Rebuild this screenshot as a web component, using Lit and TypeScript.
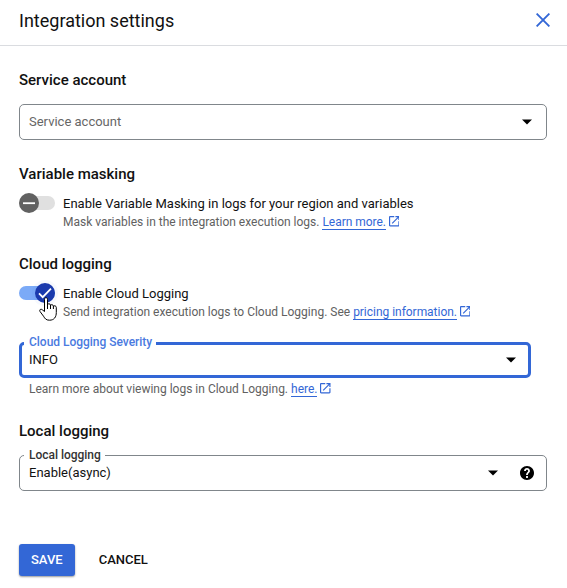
import { LitElement, html, css, svg } from "lit";
import { customElement, property } from "lit/decorators.js";

@customElement("select-field")
class SelectField extends LitElement {
  @property() label = "";
  @property() value = "";
  @property() placeholder = "";
  @property({ type: Boolean, reflect: true }) active = false;
  @property({ type: Boolean, reflect: true }) help = false;

  static styles = css`
    :host { display: block; position: relative; height: 36px; box-sizing: border-box; border: 1px solid #80868b; border-radius: 5px; }
    :host([active]) { border: 3px solid #3367d6; margin-right: 16px; }
    .row { display: flex; align-items: center; height: 100%; padding: 0 13px 0 9px; }
    :host([active]) .row { padding: 0 11px 0 7px; }
    .text { flex: 1; font-size: 13px; line-height: 20px; color: #111; }
    .placeholder { color: #666; }
    .arrow { width: 12px; height: 6px; display: block; }
    .help { width: 14px; height: 14px; display: block; margin-left: 21px; }
    :host([help]) .row { padding-right: 12px; }
    .label { position: absolute; top: -9px; left: 4px; padding: 0 4px 0 5px; background: #fff; font-size: 12px; line-height: 16px; font-weight: 500; letter-spacing: -0.02px; color: #333; white-space: nowrap; }
    :host([active]) .label { top: -11px; left: 2px; color: #4a7ae0; }
  `;

  render() {
    return html`
      ${this.label ? html`<span class="label">${this.label}</span>` : ""}
      <div class="row">
        <span class="text ${this.value ? "" : "placeholder"}">${this.value || this.placeholder}</span>
        <svg class="arrow" viewBox="0 0 12 6"><path d="M1 .5h10L6 5.5z" fill="#000" /></svg>
        ${this.help
          ? html`<svg class="help" viewBox="2 2 20 20"><path fill="#000" d="M12 2C6.48 2 2 6.48 2 12s4.48 10 10 10 10-4.48 10-10S17.52 2 12 2zm1.300 17h-2.600v-2.600h2.600v2.600zm1.900-7.600l-.9.92C13.500 13 13.300 13.500 13.300 15h-2.600v-.7c0-1.100.45-2.100 1.170-2.830l1.240-1.260c.3-.3.5-.7.5-1.210 0-.9-.7-1.600-1.600-1.600s-1.600.7-1.600 1.600H7.800c0-2.300 1.900-4.200 4.200-4.200s4.200 1.900 4.200 4.200c0 .9-.4 1.800-1 2.400z"/></svg>`
          : ""}
      </div>
    `;
  }
}

@customElement("toggle-switch")
class ToggleSwitch extends LitElement {
  @property({ type: Boolean, reflect: true }) on = false;

  static styles = css`
    :host { display: flex; align-items: center; position: relative; width: 36px; height: 18px; }
    .track { width: 36px; height: 14px; border-radius: 7px; background: #e0e0e0; }
    .knob { position: absolute; left: 0; top: -1px; width: 20px; height: 20px; border-radius: 50%; background: #616161; }
    :host([on]) .track { background: #7baaf7; }
    :host([on]) .knob { left: 16px; background: #1a3aad; box-shadow: 0 0 0 3px rgba(51, 103, 214, 0.04); }
    svg { display: block; width: 20px; height: 20px; }
  `;

  render() {
    const mark = this.on ? svg`<path d="M4 10.3l3.7 3.8L16 5.6" />` : svg`<path d="M4 10.2h12" />`;
    return html`
      <div class="track"></div>
      <div class="knob"><svg viewBox="0 0 20 20" fill="none" stroke="#fff" stroke-width="1.8">${mark}</svg></div>
    `;
  }
}

@customElement("ext-link")
class ExtLink extends LitElement {
  @property() text = "";

  static styles = css`
    :host { display: inline-flex; align-items: center; height: 16px; color: #3367d6; letter-spacing: -0.03px; }
    a { line-height: 16px; height: 16px; box-shadow: 0 -1px 0 #3367d6 inset; }
    svg { width: 10.5px; height: 10.5px; margin: 0 0 1px 3px; }
  `;

  render() {
    return html`<a>${this.text}</a><svg viewBox="3 3 18 18"><path fill="currentColor" d="M19 19H5V5h7V3H5c-1.11 0-2 .9-2 2v14c0 1.1.89 2 2 2h14c1.1 0 2-.9 2-2v-7h-2v7zM14 3v2h3.59l-9.83 9.83 1.41 1.41L19 6.41V10h2V3h-7z"/></svg>`;
  }
}

@customElement("app-root")
class AppRoot extends LitElement {
  static styles = css`
    :host { display: block; height: 588px; overflow: hidden; background: #fff; font-family: Roboto, "Liberation Sans", sans-serif; color: #111; }
    header { display: flex; align-items: center; justify-content: space-between; height: 45px; box-sizing: content-box; border-bottom: 1px solid #dadce0; padding: 0 17px 0 19px; }
    h1 { margin: 0 0 4px; font-size: 18px; line-height: 24px; font-weight: 400; }
    .close { width: 14px; height: 14px; margin-bottom: 5px; }
    main { display: flex; flex-direction: column; padding: 0 20px 0 19px; }
    h2 { margin: 24px 0 0; font-size: 15px; line-height: 20px; font-weight: 500; }
    .field { margin-top: 14px; }
    .option { display: grid; grid-template-columns: 36px 1fr; column-gap: 8px; margin-top: 10px; position: relative; }
    .name { font-size: 13px; line-height: 20px; }
    .hint { display: flex; gap: 3px; height: 16px; font-size: 12px; line-height: 16px; color: #616161; white-space: nowrap; }
    .option .hint { grid-column: 2; }
    .severity { margin-top: 22px; }
    .below { margin: 3px 0 0 10px; }
    .cursor { position: absolute; left: 19px; top: 12px; width: 20px; height: 26px; }
    .actions { display: flex; align-items: center; margin-top: 53px; gap: 12px; }
    button { font: 500 13px/32px Roboto, sans-serif; height: 32px; padding: 0 12px; border: 0; border-radius: 3px; background: none; color: #111; }
    .save { background: #3367d6; color: #fff; box-shadow: 0 1px 2px rgba(0, 0, 0, 0.4); }
  `;

  render() {
    return html`
      <header>
        <h1>Integration settings</h1>
        <svg class="close" viewBox="0 0 14 14" fill="none" stroke="#3367d6" stroke-width="1.9"><path d="M.6.6l12.8 12.8M13.4.6L.6 13.4" /></svg>
      </header>
      <main>
        <h2>Service account</h2>
        <select-field class="field" placeholder="Service account"></select-field>

        <h2>Variable masking</h2>
        <div class="option">
          <toggle-switch></toggle-switch>
          <span class="name">Enable Variable Masking in logs for your region and variables</span>
          <div class="hint"><span>Mask variables in the integration execution logs.</span><ext-link text="Learn more."></ext-link></div>
        </div>

        <h2>Cloud logging</h2>
        <div class="option">
          <toggle-switch on></toggle-switch>
          <span class="name">Enable Cloud Logging</span>
          <div class="hint"><span>Send integration execution logs to Cloud Logging. See</span><ext-link text="pricing information."></ext-link></div>
          <svg class="cursor" viewBox="0 0 20 26"><path fill="#fff" stroke="#000" stroke-linejoin="round" d="M6.500 15.500V3.500c0-2.500 3-2.500 3 0v5c.5-1 3-1 3 .7.7-.9 2.900-.6 2.900 1 .8-.8 2.900-.4 2.900 1.200v5c0 4.500-2 7.800-6.800 7.800-3.500 0-4.500-1.500-6-4L2 15.500c-1-2 1-3 2.300-1.700z" /><path stroke="#000" fill="none" d="M9.500 8v5M12.500 9v4M15.400 10v3" /></svg>
        </div>
        <select-field class="severity" active label="Cloud Logging Severity" value="INFO"></select-field>
        <div class="hint below"><span>Learn more about viewing logs in Cloud Logging.</span><ext-link text="here."></ext-link></div>

        <h2>Local logging</h2>
        <select-field class="field" help label="Local logging" value="Enable(async)"></select-field>

        <div class="actions">
          <button class="save">SAVE</button>
          <button>CANCEL</button>
        </div>
      </main>
    `;
  }
}
